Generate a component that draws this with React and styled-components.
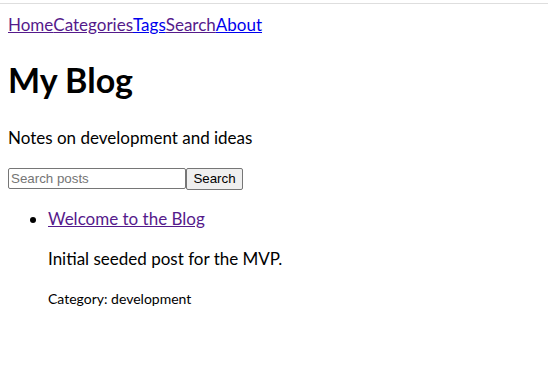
import React from "react";
import styled, { createGlobalStyle } from "styled-components";

const GlobalStyle = createGlobalStyle`
  body {
    margin: 0;
    background: #fff;
    color: #000;
    font-family: Lato, "Noto Sans", sans-serif;
  }
`;

// data
const navItems = [
  { label: "Home", visited: true },
  { label: "Categories", visited: true },
  { label: "Tags", visited: false },
  { label: "Search", visited: true },
  { label: "About", visited: false },
];

const posts = [
  {
    title: "Welcome to the Blog",
    summary: "Initial seeded post for the MVP.",
    category: "development",
  },
];

function App() {
  return (
    <>
      <GlobalStyle />
      <TopRule />
      <Page>
        <Nav>
          {navItems.map((item) => (
            <NavLink key={item.label} href="#" $visited={item.visited}>
              {item.label}
            </NavLink>
          ))}
        </Nav>
        <Title>My Blog</Title>
        <Tagline>Notes on development and ideas</Tagline>
        <SearchForm onSubmit={(e) => e.preventDefault()}>
          <SearchInput type="text" placeholder="Search posts" />
          <SearchButton type="submit">Search</SearchButton>
        </SearchForm>
        <PostList>
          {posts.map((post) => (
            <PostItem key={post.title}>
              <PostLink href="#">{post.title}</PostLink>
              <PostSummary>{post.summary}</PostSummary>
              <PostMeta>Category: {post.category}</PostMeta>
            </PostItem>
          ))}
        </PostList>
      </Page>
    </>
  );
}

export default App;

// styles
const TopRule = styled.div`
  margin-top: 3px;
  border-top: 1px solid #dedede;
`;

const Page = styled.div`
  padding: 0 8px;
`;

const Nav = styled.nav`
  display: flex;
  margin-top: 8px;
  font-size: 17px;
  line-height: 25.5px;
`;

const NavLink = styled.a`
  color: ${(p) => (p.$visited ? "#551a8b" : "#0000ee")};
  text-decoration: underline;
`;

const Title = styled.h1`
  margin: 22px 0 0;
  font-size: 34px;
  font-weight: 700;
  line-height: 40.8px;
`;

const Tagline = styled.p`
  margin: 24.5px 0 0;
  font-size: 17px;
  line-height: 25.5px;
`;

const SearchForm = styled.form`
  display: flex;
  align-items: center;
  margin-top: 17.5px;
`;

const SearchInput = styled.input`
  width: 178px;
  height: 21px;
  box-sizing: border-box;
  padding: 1px 2px;
  border: 1px solid #767676;
  border-radius: 2px;
  font: 13.33px "Liberation Sans", Arial, sans-serif;
  color: #000;

  &::placeholder {
    color: #757575;
  }
`;

const SearchButton = styled.button`
  width: 57px;
  height: 22px;
  box-sizing: border-box;
  padding: 1px 6px;
  border: 1px solid #767676;
  border-radius: 2px;
  background: #efefef;
  font: 13.33px "Liberation Sans", Arial, sans-serif;
  color: #000;
`;

const PostList = styled.ul`
  margin: 16.5px 0 0;
  padding-left: 40px;
`;

const PostItem = styled.li`
  font-size: 17px;
  line-height: 25.5px;
`;

const PostLink = styled.a`
  color: #551a8b;
  text-decoration: underline;
`;

const PostSummary = styled.p`
  margin: 14.5px 0 0;
`;

const PostMeta = styled.p`
  margin: 16px 0 0;
  font-size: 14px;
  line-height: 21px;
`;
